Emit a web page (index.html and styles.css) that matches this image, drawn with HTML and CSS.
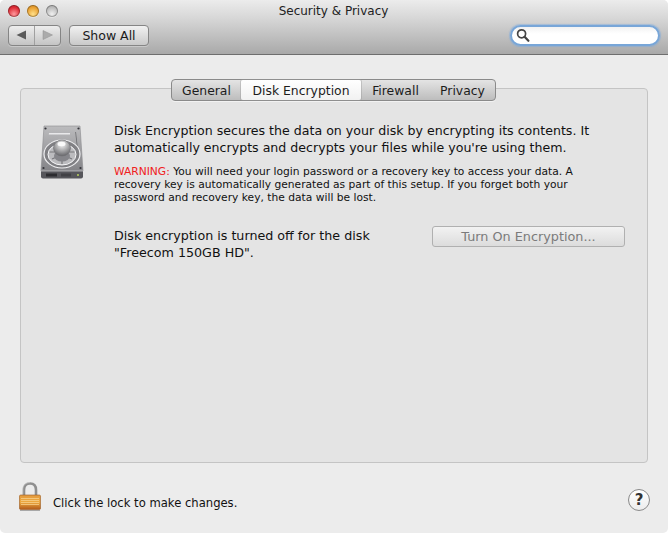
FILE: index.html
```html
<!DOCTYPE html>
<html lang="en">

<head>
    <meta charset="UTF-8">
    <title>Security &amp; Privacy</title>
    <link rel="stylesheet" href="styles.css">
</head>

<body>
    <div class="window">
        <header class="titlebar">
            <div class="title-row">
                <div class="lights">
                    <span class="light light-close"></span>
                    <span class="light light-min"></span>
                    <span class="light light-zoom"></span>
                </div>
                <div class="title">Security &amp; Privacy</div>
            </div>
            <div class="toolbar">
                <div class="nav-group">
                    <button class="nav-btn nav-back" type="button">
                        <svg width="11" height="10" viewBox="0 0 11 10"><path d="M0.5 5 L10 0.5 V9.5 Z" fill="#5a5a5a"/></svg>
                    </button>
                    <button class="nav-btn" type="button">
                        <svg width="11" height="10" viewBox="0 0 11 10"><path d="M10.5 5 L1 0.5 V9.5 Z" fill="#ababab" stroke="#929292" stroke-width="0.5"/></svg>
                    </button>
                </div>
                <button class="show-all" type="button">Show All</button>
                <div class="search">
                    <svg width="14" height="15" viewBox="0 0 14 15">
                        <circle cx="5.6" cy="5.8" r="4" fill="none" stroke="#444" stroke-width="1.7"/>
                        <path d="M8.6 8.8 L12.4 12.8" stroke="#444" stroke-width="2.2" stroke-linecap="round"/>
                    </svg>
                </div>
            </div>
        </header>

        <main class="content">
            <nav class="tabs">
                <span class="tab tab-general">General</span>
                <span class="tab tab-active">Disk Encryption</span>
                <span class="tab tab-firewall">Firewall</span>
                <span class="tab tab-privacy">Privacy</span>
            </nav>
            <section class="panel">
                <div class="intro">
                    <svg class="disk" width="44" height="56" viewBox="0 0 44 56">
                        <defs>
                            <linearGradient id="diskBody" x1="0" y1="0" x2="0" y2="1">
                                <stop offset="0" stop-color="#bcbcbe"/>
                                <stop offset="0.5" stop-color="#a0a0a3"/>
                                <stop offset="1" stop-color="#838387"/>
                            </linearGradient>
                            <radialGradient id="diskKnob" cx="0.5" cy="0.3" r="0.7">
                                <stop offset="0" stop-color="#f4f4f4"/>
                                <stop offset="0.55" stop-color="#a6a6a8"/>
                                <stop offset="1" stop-color="#66666a"/>
                            </radialGradient>
                        </defs>
                        <path d="M4 1 H40 L43 46 H1 Z" fill="url(#diskBody)" stroke="#8a8a8d" stroke-width="0.6"/>
                        <path d="M1 46 H43 V51.5 Q43 53.5 41 53.5 H3 Q1 53.5 1 51.5 Z" fill="#56565b"/>
                        <path d="M1 46 H43" stroke="#c4c4c6" stroke-width="0.8"/>
                        <path d="M9 8 H30 V9.6 H8.8 Z" fill="#e8e8ea"/>
                        <path d="M36 7 L37.6 21 H36.8 L35.2 7 Z" fill="#6e6e72"/>
                        <ellipse cx="22" cy="29" rx="18" ry="14" fill="#808084" stroke="#efeff1" stroke-width="1.2"/>
                        <ellipse cx="22" cy="29.5" rx="14" ry="10.5" fill="#bcbcbf" stroke="#f6f6f8" stroke-width="1"/>
                        <path d="M9.5 27 H15 M29 27 H34.5 M12 34 L16.5 32 M32 34 L27.5 32 M22 35 V39" stroke="#77777b" stroke-width="1.2"/>
                        <ellipse cx="22" cy="31" rx="8" ry="5.5" fill="#85858a"/>
                        <ellipse cx="22" cy="23" rx="8.5" ry="8" fill="url(#diskKnob)" stroke="#707074" stroke-width="0.6"/>
                        <ellipse cx="21.5" cy="19" rx="4" ry="2.2" fill="#fafafa"/>
                        <circle cx="5.5" cy="3.5" r="1.1" fill="#333338"/>
                        <circle cx="38.5" cy="3.5" r="1.1" fill="#333338"/>
                        <circle cx="3.5" cy="43" r="1.1" fill="#333338"/>
                        <circle cx="40.5" cy="43" r="1.1" fill="#333338"/>
                        <path d="M6 48.5 H17 V51.5 H6 Z" fill="#2c2c30"/>
                        <path d="M22 48.5 V51.5 M24 48.5 V51.5 M26 48.5 V51.5 M28 48.5 V51.5 M30 48.5 V51.5" stroke="#2c2c30" stroke-width="1"/>
                        <circle cx="38" cy="50" r="0.9" fill="#c4de5c"/>
                    </svg>
                    <div class="intro-text">
                        <p class="lead">Disk Encryption secures the data on your disk by encrypting its contents. It automatically encrypts and decrypts your files while you're using them.</p>
                        <p class="warning"><span class="warning-label">WARNING:</span> You will need your login password or a recovery key to access your data. A recovery key is automatically generated as part of this setup. If you forget both your password and recovery key, the data will be lost.</p>
                    </div>
                </div>
                <div class="status-row">
                    <p class="status">Disk encryption is turned off for the disk<br>"Freecom 150GB HD".</p>
                    <button class="turn-on" type="button" disabled>Turn On Encryption...</button>
                </div>
            </section>
        </main>

        <footer class="footer">
            <div class="lock-wrap">
                <svg width="24" height="30" viewBox="0 0 24 30">
                    <defs>
                        <linearGradient id="lockBody" x1="0" y1="0" x2="0" y2="1">
                            <stop offset="0" stop-color="#e39a3e"/>
                            <stop offset="0.5" stop-color="#eda93f"/>
                            <stop offset="1" stop-color="#b0591a"/>
                        </linearGradient>
                    </defs>
                    <path d="M6 13 V8 C6 3.5 8.2 1.5 12 1.5 C15.8 1.5 18 3.5 18 8 V13" fill="none" stroke="#8f8f8f" stroke-width="2.6"/>
                    <path d="M4.8 13 V8 C4.8 3 7.7 0.6 12 0.6" fill="none" stroke="#c9c9c9" stroke-width="0.7"/>
                    <rect x="1.5" y="13" width="21" height="14.5" rx="1.2" fill="url(#lockBody)" stroke="#9a5a22" stroke-width="0.6"/>
                    <path d="M3 16.5 H21 M3 18.5 H21 M3 20.5 H21 M3 22.5 H21" stroke="#f6cf8c" stroke-width="0.8"/>
                    <path d="M2 28.5 H22" stroke="#a8a8a8" stroke-width="1"/>
                </svg>
                <span class="lock-label">Click the lock to make changes.</span>
            </div>
            <button class="help" type="button">?</button>
        </footer>
    </div>
</body>

</html>
```

FILE: styles.css
```css
html, body {
    margin: 0;
    padding: 0;
    background: #fff;
}

.window {
    width: 668px;
    height: 533px;
    background: #ececec;
    border-radius: 5px;
    overflow: hidden;
    display: flex;
    flex-direction: column;
    font-family: "DejaVu Sans", "Liberation Sans", sans-serif;
    color: #111;
}

/* title bar + toolbar */
.titlebar {
    height: 54px;
    box-sizing: content-box;
    border-bottom: 1px solid #6e6e6e;
    background: linear-gradient(#ececec, #d6d6d6 35%, #a9a9a9);
    display: flex;
    flex-direction: column;
}

.title-row {
    height: 24px;
    display: flex;
    align-items: center;
    position: relative;
    justify-content: center;
}

.title {
    font-size: 12px;
    color: #222;
    margin-right: 1px;
    padding-bottom: 2px;
}

.lights {
    position: absolute;
    left: 8px;
    top: 5px;
    display: flex;
    gap: 7px;
}

.light {
    width: 12px;
    height: 12px;
    border-radius: 50%;
    box-shadow: inset 0 0 0 1px rgba(0, 0, 0, 0.28), 0 1px 0 rgba(255, 255, 255, 0.35);
}

.light-close {
    background: radial-gradient(circle at 50% 75%, #ff9a9e, #dd2c36 60%, #a81f28);
}

.light-min {
    background: radial-gradient(circle at 50% 75%, #ffe08a, #e9a030 60%, #b5761f);
}

.light-zoom {
    background: radial-gradient(circle at 50% 75%, #f0f0f0, #bcbcbc 60%, #8f8f8f);
}

.toolbar {
    display: flex;
    align-items: center;
    padding: 0 8px;
    height: 22px;
}

.nav-group {
    width: 53px;
    height: 21px;
    box-sizing: border-box;
    display: flex;
    border: 1px solid #858585;
    border-radius: 4px;
    background: linear-gradient(#ededed, #c4c4c4);
    box-shadow: 0 1px 0 rgba(255, 255, 255, 0.3);
}

.nav-btn {
    flex: 1;
    padding: 0;
    border: 0;
    background: none;
    display: flex;
    align-items: center;
    justify-content: center;
}

.nav-back {
    border-right: 1px solid #a0a0a0;
}

.show-all {
    width: 80px;
    height: 21px;
    margin-left: 8px;
    padding: 0;
    font: 12.5px "DejaVu Sans", sans-serif;
    color: #1a1a1a;
    border: 1px solid #858585;
    border-radius: 4px;
    background: linear-gradient(#f1f1f1, #c9c9c9);
    box-shadow: 0 1px 0 rgba(255, 255, 255, 0.3);
}

.search {
    margin-left: auto;
    width: 150px;
    height: 21px;
    box-sizing: border-box;
    border: 2px solid #78a6d8;
    border-radius: 11px;
    background: linear-gradient(#f2f2f2, #fff 40%);
    box-shadow: 0 0 1px 1px rgba(120, 170, 225, 0.5);
    display: flex;
    align-items: center;
    padding-left: 4px;
}

/* tabs + panel */
.content {
    padding: 24px 20px 0;
}

.tabs {
    display: flex;
    width: 325px;
    height: 22px;
    box-sizing: border-box;
    margin: 0 auto -13px 151px;
    position: relative;
    border: 1px solid #8a8a8a;
    border-radius: 4px;
    background: linear-gradient(#e4e4e4, #bdbdbd);
    box-shadow: 0 1px 0 rgba(255, 255, 255, 0.5);
    font-size: 12.4px;
    color: #1c1c1c;
}

.tab {
    display: flex;
    align-items: center;
    justify-content: center;
}

.tab-general {
    width: 69px;
}

.tab-active {
    width: 120px;
    background: linear-gradient(#fff, #f1f1f1);
    border-radius: 2px;
    box-shadow: 0 0 0 1px rgba(150, 150, 150, 0.4);
}

.tab-firewall {
    width: 69px;
}

.tab-privacy {
    width: 65px;
}

.panel {
    height: 375px;
    box-sizing: border-box;
    background: #e4e4e4;
    border: 1px solid #c4c4c4;
    border-radius: 4px;
    padding: 33px 22px 0 19px;
}

.intro {
    display: flex;
}

.disk {
    flex: none;
    margin-top: 3px;
}

.intro-text {
    margin-left: 30px;
}

.lead {
    margin: 0;
    font-size: 12.6px;
    line-height: 17px;
}

.warning {
    margin: 9px 0 0;
    max-width: 470px;
    font-size: 10.7px;
    line-height: 13px;
}

.warning-label {
    color: #f02020;
}

.status-row {
    display: flex;
    align-items: flex-start;
    justify-content: space-between;
    margin: 22px 0 0 74px;
}

.status {
    margin: 0;
    font-size: 12.7px;
    line-height: 17px;
    padding-top: 1px;
}

.turn-on {
    width: 193px;
    height: 21px;
    padding: 0;
    font: 12.8px "DejaVu Sans", sans-serif;
    color: #7b7b7b;
    border: 1px solid #b0b0b0;
    border-radius: 3px;
    background: linear-gradient(#f2f2f2, #dcdcdc);
}

/* bottom bar */
.footer {
    display: flex;
    align-items: flex-end;
    justify-content: space-between;
    padding: 19px 18px 0 18px;
}

.lock-wrap {
    display: flex;
    align-items: flex-end;
    gap: 11px;
}

.lock-label {
    font-size: 11.6px;
    line-height: 15px;
    padding-bottom: 1px;
}

.help {
    width: 22px;
    height: 22px;
    padding: 0;
    margin-bottom: 1px;
    border: 1px solid #8a8a8a;
    border-radius: 50%;
    background: linear-gradient(#fff, #ececec);
    font: bold 15px "DejaVu Sans", sans-serif;
    color: #333;
}
```
